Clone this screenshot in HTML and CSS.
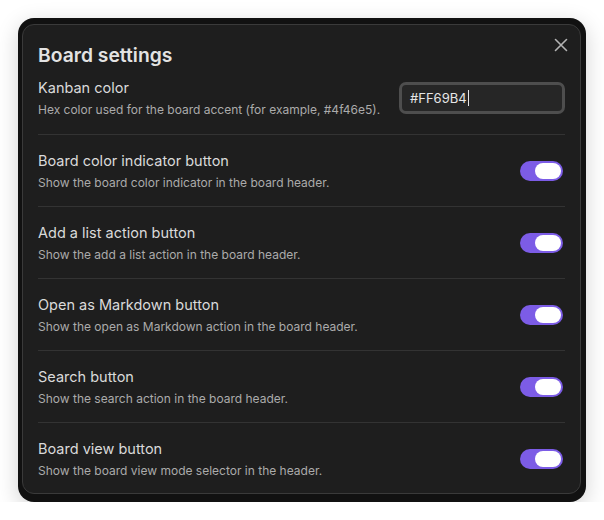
FILE: index.html
```html
<!DOCTYPE html>
<html lang="en">
<head>
  <meta charset="UTF-8" />
  <title>Board settings</title>
  <link rel="stylesheet" href="styles.css">
</head>
<body>
  <div class="frame">
    <div class="modal">
      <button class="close" aria-label="Close">
        <svg width="14" height="14" viewBox="0 0 14 14"><path d="M1.5 1.5 L12.5 12.5 M12.5 1.5 L1.5 12.5" stroke="#b3b3b3" stroke-width="1.6" stroke-linecap="round"/></svg>
      </button>
      <h2 class="title">Board settings</h2>

      <div class="setting first">
        <div class="info">
          <div class="name">Kanban color</div>
          <div class="desc">Hex color used for the board accent (for example, #4f46e5).</div>
        </div>
        <div class="hex-input">#FF69B4<span class="caret"></span></div>
      </div>

      <div class="setting">
        <div class="info">
          <div class="name">Board color indicator button</div>
          <div class="desc">Show the board color indicator in the board header.</div>
        </div>
        <div class="toggle"><div class="knob"></div></div>
      </div>

      <div class="setting">
        <div class="info">
          <div class="name">Add a list action button</div>
          <div class="desc">Show the add a list action in the board header.</div>
        </div>
        <div class="toggle"><div class="knob"></div></div>
      </div>

      <div class="setting">
        <div class="info">
          <div class="name">Open as Markdown button</div>
          <div class="desc">Show the open as Markdown action in the board header.</div>
        </div>
        <div class="toggle"><div class="knob"></div></div>
      </div>

      <div class="setting">
        <div class="info">
          <div class="name">Search button</div>
          <div class="desc">Show the search action in the board header.</div>
        </div>
        <div class="toggle"><div class="knob"></div></div>
      </div>

      <div class="setting">
        <div class="info">
          <div class="name">Board view button</div>
          <div class="desc">Show the board view mode selector in the header.</div>
        </div>
        <div class="toggle"><div class="knob"></div></div>
      </div>
    </div>
  </div>
</body>
</html>
```

FILE: styles.css
```css
body {
  margin: 0;
  background: #fff;
  font-family: Inter, 'Noto Sans', sans-serif;
}

.frame {
  margin: 18px 0 0 18px;
  width: 568px;
  height: 484px;
  box-sizing: border-box;
  padding: 6px 5px 8px 4px;
  background: #111;
  border-radius: 16px;
  box-shadow: 0 6px 22px rgba(0, 0, 0, 0.18);
}

.modal {
  position: relative;
  height: 100%;
  box-sizing: border-box;
  padding: 18px 15px 0;
  background: #1e1e1e;
  border: 1px solid #3a3a3a;
  border-radius: 12px;
  color: #dadada;
}

.close {
  position: absolute;
  top: 13px;
  right: 12px;
  padding: 0;
  border: none;
  background: none;
  cursor: pointer;
}

.title {
  margin: 0;
  font-size: 19.3px;
  line-height: 24px;
  font-weight: 600;
  color: #e3e3e3;
}

.setting {
  display: flex;
  align-items: center;
  justify-content: space-between;
  padding: 15px 0;
  border-top: 1px solid #333;
  height: 72px;
  box-sizing: border-box;
}

.setting.first {
  border-top: none;
  padding: 9px 0 15px;
  height: 67px;
}

.name {
  font-size: 14.5px;
  line-height: 22px;
  color: #dadada;
}

.desc {
  margin-top: 2px;
  font-size: 12px;
  line-height: 18px;
  color: #ababab;
}

.hex-input {
  width: 166px;
  height: 32px;
  box-sizing: border-box;
  padding: 0 8px;
  display: flex;
  align-items: center;
  background: #262626;
  border: 3px solid #4e4e4e;
  border-radius: 7px;
  font-size: 13px;
  color: #e6e6e6;
}

.caret {
  display: inline-block;
  width: 1px;
  height: 16px;
  margin-left: 1px;
  background: #e6e6e6;
}

.toggle {
  width: 43px;
  height: 20px;
  margin-right: 2px;
  box-sizing: border-box;
  padding: 2px;
  display: flex;
  justify-content: flex-end;
  background: #7c5ce6;
  border-radius: 10px;
}

.knob {
  width: 26px;
  height: 16px;
  background: #fff;
  border-radius: 8px;
}
```
